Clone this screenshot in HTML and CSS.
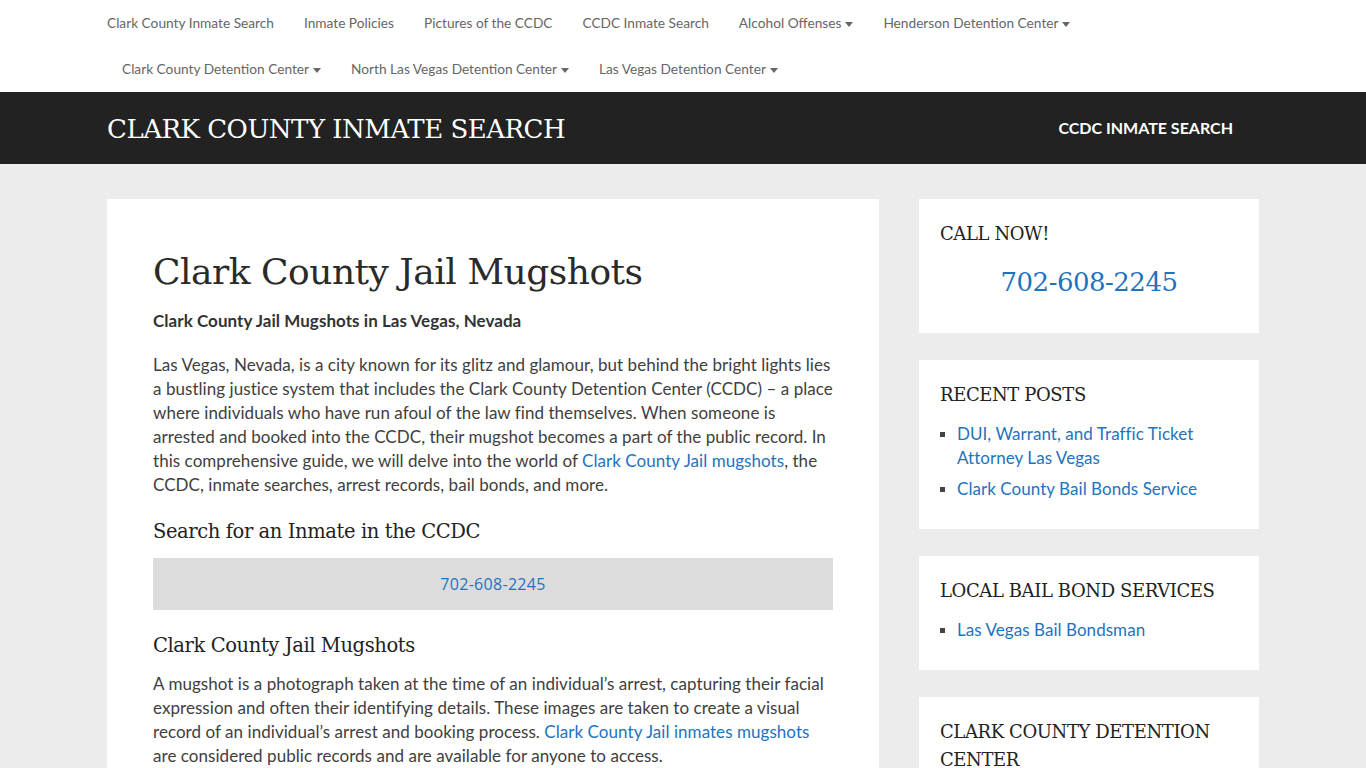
FILE: index.html
```html
<!DOCTYPE html>
<html lang="en">
<head>
    <meta charset="UTF-8">
    <meta name="viewport" content="width=device-width, initial-scale=1.0">
    <title>Clark County Jail Mugshots - Clark County Inmate Search</title>
    <link rel="stylesheet" href="styles.css">
</head>
<body>
    <nav class="topnav">
        <ul class="wrap menu">
            <li><a href="#">Clark County Inmate Search</a></li>
            <li><a href="#">Inmate Policies</a></li>
            <li><a href="#">Pictures of the CCDC</a></li>
            <li><a href="#">CCDC Inmate Search</a></li>
            <li><a href="#">Alcohol Offenses<span class="caret"></span></a></li>
            <li><a href="#">Henderson Detention Center<span class="caret"></span></a></li>
            <li><a href="#">Clark County Detention Center<span class="caret"></span></a></li>
            <li><a href="#">North Las Vegas Detention Center<span class="caret"></span></a></li>
            <li><a href="#">Las Vegas Detention Center<span class="caret"></span></a></li>
        </ul>
    </nav>

    <header class="site-header">
        <div class="wrap header-inner">
            <a class="site-title" href="#">Clark County Inmate Search</a>
            <a class="header-link" href="#">CCDC Inmate Search</a>
        </div>
    </header>

    <div class="wrap site-content">
        <main class="content-card">
            <h1>Clark County Jail Mugshots</h1>
            <p class="lead"><strong>Clark County Jail Mugshots in Las Vegas, Nevada</strong></p>
            <p>Las Vegas, Nevada, is a city known for its glitz and glamour, but behind the bright lights lies a bustling justice system that includes the Clark County Detention Center (CCDC) – a place where individuals who have run afoul of the law find themselves. When someone is arrested and booked into the CCDC, their mugshot becomes a part of the public record. In this comprehensive guide, we will delve into the world of <a href="#">Clark County Jail mugshots</a>, the CCDC, inmate searches, arrest records, bail bonds, and more.</p>

            <h2>Search for an Inmate in the CCDC</h2>
            <div class="call-box"><a href="#">702-608-2245</a></div>

            <h2>Clark County Jail Mugshots</h2>
            <p>A mugshot is a photograph taken at the time of an individual’s arrest, capturing their facial expression and often their identifying details. These images are taken to create a visual record of an individual’s arrest and booking process. <a href="#">Clark County Jail inmates mugshots</a> are considered public records and are available for anyone to access.</p>
        </main>

        <aside class="sidebar">
            <section class="widget">
                <h3>Call Now!</h3>
                <a class="widget-phone" href="#">702-608-2245</a>
            </section>
            <section class="widget">
                <h3>Recent Posts</h3>
                <ul class="widget-list">
                    <li><a href="#">DUI, Warrant, and Traffic Ticket Attorney Las Vegas</a></li>
                    <li><a href="#">Clark County Bail Bonds Service</a></li>
                </ul>
            </section>
            <section class="widget">
                <h3>Local Bail Bond Services</h3>
                <ul class="widget-list">
                    <li><a href="#">Las Vegas Bail Bondsman</a></li>
                </ul>
            </section>
            <section class="widget">
                <h3>Clark County Detention Center</h3>
                <ul class="widget-list">
                    <li><a href="#">Clark County Detention Center</a></li>
                </ul>
            </section>
        </aside>
    </div>
</body>
</html>
```

FILE: styles.css
```css
body {
    margin: 0;
    background-color: #ececec;
    color: #404040;
    font-family: Lato, "Open Sans", sans-serif;
    font-size: 17px;
    letter-spacing: 0.05px;
    line-height: 24px;
}
a {
    color: #1e73be;
    text-decoration: none;
}
.wrap {
    width: 1152px;
    margin: 0 auto;
}

/* top menu */
.topnav {
    background: white;
}
.menu {
    display: flex;
    flex-wrap: wrap;
    list-style: none;
    padding: 0;
    margin-top: 0;
    margin-bottom: 0;
}
.menu li {
    padding: 0 15px;
    line-height: 46px;
    font-size: 13.7px;
    letter-spacing: 0;
}
.menu li:first-child {
    padding-left: 0;
}
.menu a {
    color: #666;
}
.caret {
    display: inline-block;
    width: 0;
    height: 0;
    margin-left: 4px;
    vertical-align: middle;
    border-left: 4px solid transparent;
    border-right: 4px solid transparent;
    border-top: 5px solid #666;
}

/* header */
.site-header {
    background: #222;
}
.header-inner {
    display: flex;
    align-items: center;
    justify-content: space-between;
    height: 72px;
}
.site-title {
    color: white;
    font-family: "DejaVu Serif", serif;
    font-size: 26px;
    letter-spacing: -0.5px;
    text-transform: uppercase;
    margin-top: 2px;
}
.header-link {
    color: white;
    font-weight: bold;
    font-size: 16px;
    letter-spacing: 0;
    text-transform: uppercase;
    margin-right: 26px;
}

/* content */
.site-content {
    display: flex;
    gap: 40px;
    align-items: flex-start;
    padding-top: 35px;
}
.content-card {
    flex: 1;
    background: white;
    padding: 49px 46px 40px;
}
.content-card h1 {
    margin: 0 0 13px;
    font-family: "DejaVu Serif", serif;
    font-weight: 300;
    font-size: 36px;
    letter-spacing: -0.5px;
    line-height: 48px;
    color: #2a2a2a;
}
.content-card p {
    margin: 0 0 20px;
}
.content-card .lead {
    color: #333;
}
.content-card h2 {
    margin: 0 0 11px;
    font-family: "DejaVu Serif", serif;
    font-weight: normal;
    font-size: 19.5px;
    letter-spacing: -0.4px;
    line-height: 30px;
    color: #222;
}
.call-box {
    background: #dcdcdc;
    text-align: center;
    padding: 13px;
    line-height: 25px;
    margin-bottom: 21px;
}
.call-box a {
    font-family: "Open Sans", sans-serif;
    font-size: 16px;
    letter-spacing: 0.3px;
}

/* sidebar */
.sidebar {
    width: 340px;
    display: flex;
    flex-direction: column;
    gap: 27px;
}
.widget {
    background: white;
    padding: 21px 21px 28px;
}
.widget h3 {
    margin: 0 0 13px;
    font-family: "DejaVu Serif", serif;
    font-weight: normal;
    font-size: 18px;
    letter-spacing: -0.4px;
    line-height: 28px;
    text-transform: uppercase;
    color: #222;
}
.widget-phone {
    display: block;
    text-align: center;
    font-family: "DejaVu Serif", serif;
    font-size: 26px;
    letter-spacing: -0.5px;
    line-height: 40px;
    margin: 14px 0 3px;
}
.widget-list {
    list-style: none;
    margin: 0;
    padding: 0;
}
.widget-list li {
    display: flex;
    margin-bottom: 7px;
}
.widget-list li:last-child {
    margin-bottom: 0;
}
.widget-list li::before {
    content: "";
    flex-shrink: 0;
    width: 5px;
    height: 5px;
    margin: 10px 12px 0 0;
    background: #444;
}
```
